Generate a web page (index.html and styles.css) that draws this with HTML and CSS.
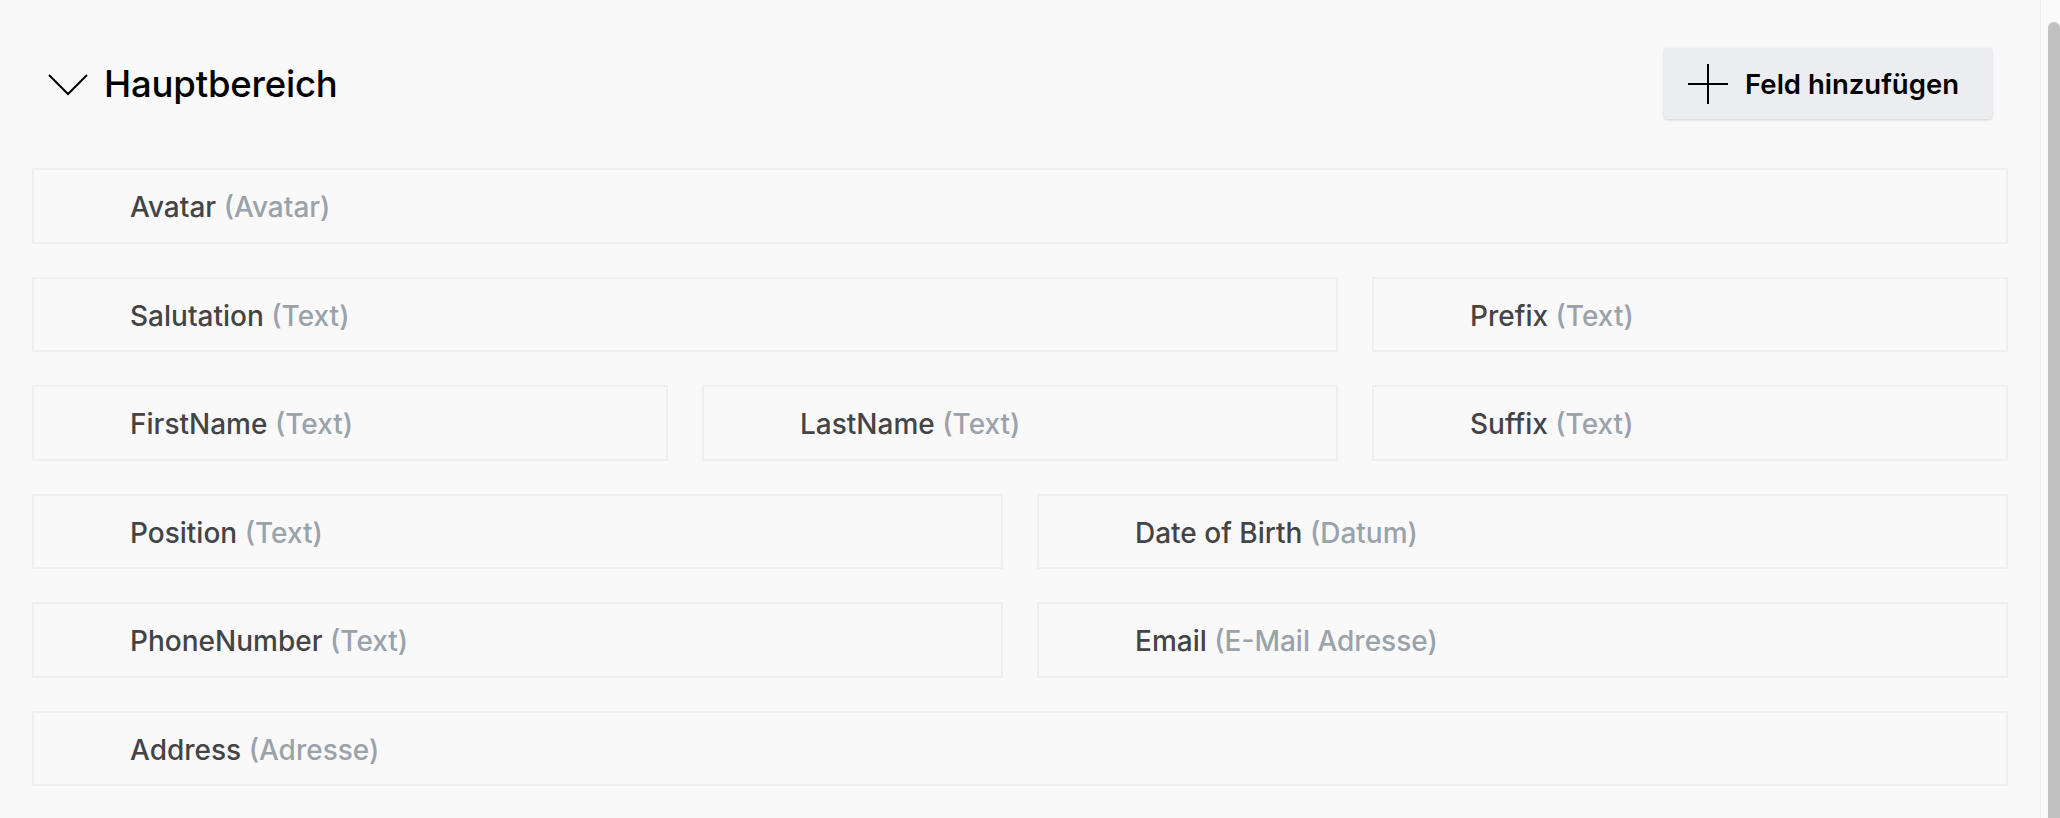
FILE: index.html
```html
<!DOCTYPE html>
<html lang="de">
<head>
<meta charset="utf-8">
<title>Hauptbereich</title>
<link rel="stylesheet" href="styles.css">
</head>
<body>
<div class="page">
  <main class="main">
    <header class="section-header">
      <div class="section-title">
        <svg class="chevron" width="40" height="22" viewBox="0 0 40 22" aria-hidden="true">
          <path d="M1 1 L20 20 L39 1" fill="none" stroke="#000" stroke-width="2"/>
        </svg>
        <h2 class="title">Hauptbereich</h2>
      </div>
      <button class="add-btn" type="button">
        <svg class="plus" width="40" height="40" viewBox="0 0 40 40" aria-hidden="true">
          <path d="M0 20 H40 M20 0 V40" fill="none" stroke="#000" stroke-width="2"/>
        </svg>
        <span>Feld hinzufügen</span>
      </button>
    </header>
    <div class="fields">
      <div class="field span-6"><p class="field-text"><span class="label">Avatar</span> <span class="type">(Avatar)</span></p></div>
      <div class="field span-4"><p class="field-text"><span class="label">Salutation</span> <span class="type">(Text)</span></p></div>
      <div class="field span-2"><p class="field-text"><span class="label">Prefix</span> <span class="type">(Text)</span></p></div>
      <div class="field span-2"><p class="field-text"><span class="label">FirstName</span> <span class="type">(Text)</span></p></div>
      <div class="field span-2"><p class="field-text"><span class="label">LastName</span> <span class="type">(Text)</span></p></div>
      <div class="field span-2"><p class="field-text"><span class="label">Suffix</span> <span class="type">(Text)</span></p></div>
      <div class="field span-3"><p class="field-text"><span class="label">Position</span> <span class="type">(Text)</span></p></div>
      <div class="field span-3"><p class="field-text"><span class="label">Date of Birth</span> <span class="type">(Datum)</span></p></div>
      <div class="field span-3"><p class="field-text"><span class="label">PhoneNumber</span> <span class="type">(Text)</span></p></div>
      <div class="field span-3"><p class="field-text"><span class="label">Email</span> <span class="type">(E-Mail Adresse)</span></p></div>
      <div class="field span-6"><p class="field-text"><span class="label">Address</span> <span class="type">(Adresse)</span></p></div>
    </div>
  </main>
  <div class="scrollbar"><div class="thumb"></div></div>
</div>
</body>
</html>
```
FILE: styles.css
```css
html, body {
  margin: 0;
  padding: 0;
  height: 100%;
  background: #f9f9f9;
  font-family: Inter, "Noto Sans", "Liberation Sans", sans-serif;
  overflow: hidden;
}

.page {
  display: flex;
  height: 818px;
}

.main {
  flex: 1;
  padding: 0 32px;
  box-sizing: border-box;
}

.section-header {
  display: flex;
  align-items: center;
  justify-content: space-between;
  padding: 48px 16px 49px 16px;
}

.section-title {
  display: flex;
  align-items: center;
  gap: 16px;
}

.chevron {
  display: block;
  margin-top: 2px;
}

.title {
  margin: 0;
  font-size: 36.5px;
  font-weight: 500;
  color: #000;
  letter-spacing: -0.2px;
}

.add-btn {
  display: flex;
  align-items: center;
  gap: 17px;
  height: 71px;
  padding: 0 33px 0 24px;
  border: none;
  border-radius: 3px;
  background: #ecedf0;
  box-shadow: 0 1px 3px rgba(0, 0, 0, 0.16);
  font-family: inherit;
  font-size: 27.5px;
  font-weight: 600;
  color: #000;
}

.plus {
  display: block;
}

.fields {
  display: grid;
  grid-template-columns: repeat(6, 1fr);
  column-gap: 34px;
  row-gap: 33px;
}

.field {
  height: 75.5px;
  box-sizing: border-box;
  border: 2px solid #efefef;
  display: flex;
  align-items: center;
  padding: 3px 0 0 96px;
}

.field-text {
  margin: 0;
  font-size: 28px;
  font-weight: 500;
  white-space: nowrap;
}

.span-2 { grid-column: span 2; }
.span-3 { grid-column: span 3; }
.span-4 { grid-column: span 4; }
.span-6 { grid-column: span 6; }

.label {
  color: #444446;
}

.type {
  color: #9aa2aa;
}

.scrollbar {
  width: 19px;
  border-left: 1px solid #ebebeb;
  background: #fafafa;
  display: flex;
  justify-content: flex-end;
}

.thumb {
  width: 12px;
  margin-top: 22px;
  background: #c1c1c1;
  border-radius: 7px 7px 0 0;
}
```
